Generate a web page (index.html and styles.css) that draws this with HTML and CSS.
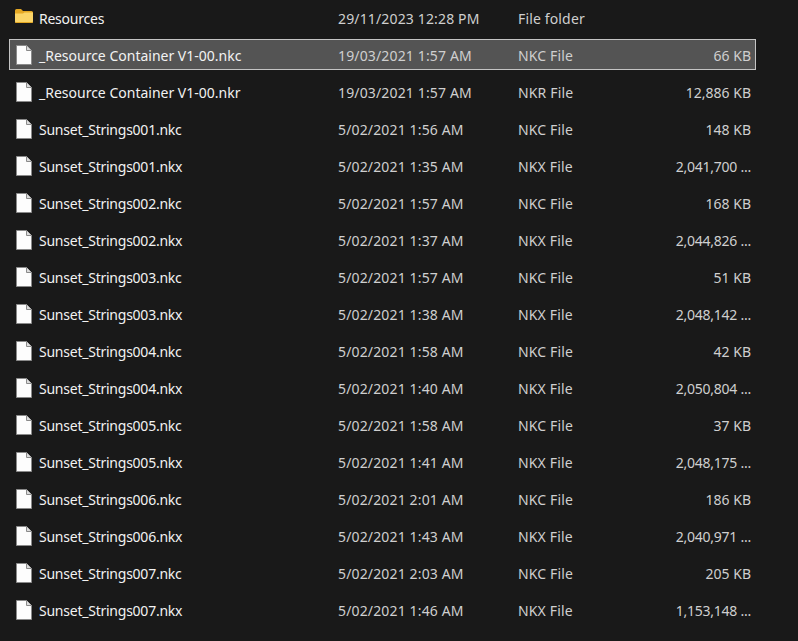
FILE: index.html
```html
<!DOCTYPE html>
<html>
<head>
  <link rel="stylesheet" href="styles.css">
</head>
<body>
	<svg class="sprites" width="0" height="0">
		<symbol id="ico-file" viewBox="0 0 16 20">
			<path d="M0.5 0.5H10.5L15.5 5.5V19.5H0.5Z" fill="#fdfdfd" stroke="#8a8a8a"/>
			<path d="M10.5 0.5V5.5H15.5" fill="#dcdcdc" stroke="#8a8a8a"/>
		</symbol>
		<symbol id="ico-folder" viewBox="0 0 18 14">
			<path d="M0 1.5Q0 0 1.5 0H6L8 2H16.5Q18 2 18 3.5V5H0Z" fill="#e5a823"/>
			<path d="M0 4.5L8 4.5L9.5 3.5H18V12.5Q18 14 16.5 14H1.5Q0 14 0 12.5Z" fill="#fbd567"/>
			<path d="M0 13H18V12.5Q18 14 16.5 14H1.5Q0 14 0 12.5Z" fill="#e5a823"/>
		</symbol>
	</svg>

	<div class="list">
		<div class="row"><svg class="ico ico-dir"><use href="#ico-folder"/></svg><span class="name">Resources</span><span class="date">29/11/2023 12:28 PM</span><span class="type">File folder</span><span class="size"></span></div>
		<div class="row selected"><svg class="ico"><use href="#ico-file"/></svg><span class="name wide">_Resource Container V1-00.nkc</span><span class="date">19/03/2021 1:57 AM</span><span class="type">NKC File</span><span class="size">66 KB</span></div>
		<div class="row"><svg class="ico"><use href="#ico-file"/></svg><span class="name wide">_Resource Container V1-00.nkr</span><span class="date">19/03/2021 1:57 AM</span><span class="type">NKR File</span><span class="size">12,886 KB</span></div>
		<div class="row"><svg class="ico"><use href="#ico-file"/></svg><span class="name">Sunset_Strings001.nkc</span><span class="date">5/02/2021 1:56 AM</span><span class="type">NKC File</span><span class="size">148 KB</span></div>
		<div class="row"><svg class="ico"><use href="#ico-file"/></svg><span class="name">Sunset_Strings001.nkx</span><span class="date">5/02/2021 1:35 AM</span><span class="type">NKX File</span><span class="size cut">2,041,700 ...</span></div>
		<div class="row"><svg class="ico"><use href="#ico-file"/></svg><span class="name">Sunset_Strings002.nkc</span><span class="date">5/02/2021 1:57 AM</span><span class="type">NKC File</span><span class="size">168 KB</span></div>
		<div class="row"><svg class="ico"><use href="#ico-file"/></svg><span class="name">Sunset_Strings002.nkx</span><span class="date">5/02/2021 1:37 AM</span><span class="type">NKX File</span><span class="size cut">2,044,826 ...</span></div>
		<div class="row"><svg class="ico"><use href="#ico-file"/></svg><span class="name">Sunset_Strings003.nkc</span><span class="date">5/02/2021 1:57 AM</span><span class="type">NKC File</span><span class="size">51 KB</span></div>
		<div class="row"><svg class="ico"><use href="#ico-file"/></svg><span class="name">Sunset_Strings003.nkx</span><span class="date">5/02/2021 1:38 AM</span><span class="type">NKX File</span><span class="size cut">2,048,142 ...</span></div>
		<div class="row"><svg class="ico"><use href="#ico-file"/></svg><span class="name">Sunset_Strings004.nkc</span><span class="date">5/02/2021 1:58 AM</span><span class="type">NKC File</span><span class="size">42 KB</span></div>
		<div class="row"><svg class="ico"><use href="#ico-file"/></svg><span class="name">Sunset_Strings004.nkx</span><span class="date">5/02/2021 1:40 AM</span><span class="type">NKX File</span><span class="size cut">2,050,804 ...</span></div>
		<div class="row"><svg class="ico"><use href="#ico-file"/></svg><span class="name">Sunset_Strings005.nkc</span><span class="date">5/02/2021 1:58 AM</span><span class="type">NKC File</span><span class="size">37 KB</span></div>
		<div class="row"><svg class="ico"><use href="#ico-file"/></svg><span class="name">Sunset_Strings005.nkx</span><span class="date">5/02/2021 1:41 AM</span><span class="type">NKX File</span><span class="size cut">2,048,175 ...</span></div>
		<div class="row"><svg class="ico"><use href="#ico-file"/></svg><span class="name">Sunset_Strings006.nkc</span><span class="date">5/02/2021 2:01 AM</span><span class="type">NKC File</span><span class="size">186 KB</span></div>
		<div class="row"><svg class="ico"><use href="#ico-file"/></svg><span class="name">Sunset_Strings006.nkx</span><span class="date">5/02/2021 1:43 AM</span><span class="type">NKX File</span><span class="size cut">2,040,971 ...</span></div>
		<div class="row"><svg class="ico"><use href="#ico-file"/></svg><span class="name">Sunset_Strings007.nkc</span><span class="date">5/02/2021 2:03 AM</span><span class="type">NKC File</span><span class="size">205 KB</span></div>
		<div class="row"><svg class="ico"><use href="#ico-file"/></svg><span class="name">Sunset_Strings007.nkx</span><span class="date">5/02/2021 1:46 AM</span><span class="type">NKX File</span><span class="size cut">1,153,148 ...</span></div>
	</div>
</body>
</html>
```
FILE: styles.css
```css
html, body {
  margin: 0;
  height: 100%;
  overflow: hidden;
  background-color: #191919;
}
.sprites {
  display: block;
  height: 0;
}

/* list of files */
.list {
  display: flex;
  flex-direction: column;
  gap: 6px;
  width: 747px;
  margin-left: 9px;
  padding-top: 2px;
  font-family: "Noto Sans", "Open Sans", sans-serif;
  font-size: 14px;
  color: #cfcfcf;
}
.row {
  display: grid;
  grid-template-columns: 23px 299px 180px 1fr auto;
  align-items: center;
  box-sizing: border-box;
  height: 31px;
  padding: 0 4px 0 6px;
  border: 1px solid transparent;
  white-space: nowrap;
}
.row span {
  padding-top: 2px;
}
.row.selected {
  background-color: #545454;
  border-color: #c4c4c4;
}
.ico {
  width: 16px;
  height: 20px;
}
.ico-dir {
  width: 18px;
  height: 14px;
  margin: 0 0 3px -1px;
}
.name {
  color: #f2f2f2;
  letter-spacing: -0.24px;
}
.name.wide {
  letter-spacing: 0;
}
.date {
  letter-spacing: 0.15px;
}
.type {
  letter-spacing: 0.15px;
}
.size {
  text-align: right;
}
.size.cut {
  letter-spacing: -0.25px;
}
```
